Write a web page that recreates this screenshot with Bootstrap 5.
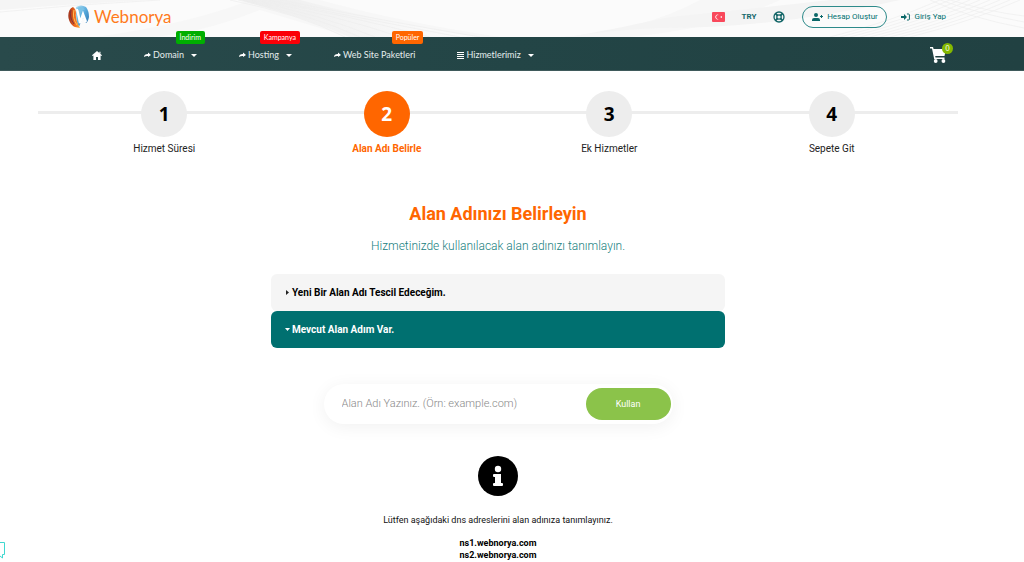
<!DOCTYPE html>
<html lang="tr">
<head>
<meta charset="utf-8">
<meta name="viewport" content="width=device-width, initial-scale=1">
<title>Webnorya - Alan Adı Belirle</title>
<link href="https://cdn.jsdelivr.net/npm/bootstrap@5.3.0/dist/css/bootstrap.min.css" rel="stylesheet">
<style>
  :root { --teal: #007070; --orange: #ff6600; --green: #8bc34a; }
  body { font-family: "Roboto", "Liberation Sans", sans-serif; font-size: 10px; line-height: 12px; color: #222; background: #fff; }
  a { text-decoration: none; }
  svg { display: block; flex: none; }
  .page-inner { padding-left: 68px; padding-right: 78px; }
  .topbar { height: 37px; padding-bottom: 4px; background: #fbfbfb; }
  .topbar-art { position: absolute; inset: 0; width: 100%; height: 100%; }
  .brand-name { font: 17px/24px "Lato", sans-serif; color: #ff7a1c; }
  .icon-gap { gap: 2px; }
  .tools { gap: 17px; }
  .tools .account { gap: 14px; }
  .tools a { color: var(--teal); font-size: 8px; line-height: 12px; }
  .tools .currency { font-weight: 700; color: #17696b; }
  .tools .signup { border: 1px solid #2d8a8a; border-radius: 12px; height: 22px; width: 85px; }
  .mainnav { min-height: 34px; padding-top: 3px; background: linear-gradient(90deg, #294a4b, #234546 50%, #214142); border-bottom: 1px solid #3f5a5b; padding-left: 92px; }
  .mainnav a { color: #e4eded; font: 9px/12px "Lato", sans-serif; }
  .menu { gap: 42px; }
  .caret { border: 3px solid transparent; border-top-color: #fff; border-bottom: 0; margin-left: 5px; }
  .tag { position: absolute; top: -18px; right: -8px; height: 13px; padding: 0 4px; border-radius: 2px; font: 7px/13px "Lato", sans-serif; color: #fff; white-space: nowrap; }
  .tag-green { background: #00ae00; }
  .tag-red { background: #fb0007; }
  .tag-orange { background: var(--orange); }
  .cart-count { position: absolute; left: 12px; top: -4px; width: 11px; height: 11px; border-radius: 50%; background: #84b800; color: #fff; font: 7px/11px "Lato", sans-serif; text-align: center; }
  main { padding: 20px 66px 0 38px; }
  .steps { padding: 0 15px; margin: 0 0 47px; background: linear-gradient(#ededed, #ededed) 0 20px / 100% 3px no-repeat; }
  .steps li { width: 25%; }
  .step-num { width: 46px; height: 46px; border-radius: 50%; background: #ededed; color: #000; font: bold 19px/47px "Open Sans", sans-serif; }
  .step-text { font-size: 10px; line-height: 12px; margin-top: 6px; }
  .active .step-num { background: var(--orange); color: #fff; }
  .active .step-text { color: var(--orange); font-weight: 700; }
  h1 { font-size: 18px; line-height: 24px; font-weight: 700; color: var(--orange); margin: 0 0 12px; }
  .intro { font-size: 12px; line-height: 16px; font-weight: 300; color: #17807e; margin: 0 0 20px; }
  .choices { width: 50%; min-width: 300px; max-width: 454px; }
  .choice { width: 100%; min-height: 37px; padding: 0 14px; gap: 2px; border: 0; border-radius: 6px; background: #f5f5f5; color: #000; font-size: 10px; font-weight: 700; }
  .choice.open { background: var(--teal); color: #fff; }
  .domain-form { width: 38%; min-width: 280px; max-width: 349px; height: 40px; margin-top: 36px; padding: 4px 2px 4px 18px; border-radius: 20px; background: #fff; box-shadow: 0 3px 18px rgba(0,0,0,.06); }
  .domain-form input { font-size: 11px; font-weight: 300; border: 0; outline: 0; min-width: 0; background: none; padding: 0; }
  .domain-form input::placeholder { color: #888; }
  .use-btn { width: 85px; border: 0; border-radius: 16px; background: var(--green); color: #fff; font-size: 9px; }
  .info-icon { margin-top: 32px; }
  .notice { font-size: 9px; line-height: 12px; margin: 18px 0 11px; color: #111; }
  .servers { font-size: 9px; line-height: 12px; }
  .chat { position: fixed; left: 0; bottom: 3px; }
</style>
</head>
<body>
<header>
  <div class="topbar page-inner position-relative d-flex align-items-center justify-content-between">
    <svg class="topbar-art" viewBox="0 0 1024 37" preserveAspectRatio="none" aria-hidden="true">
      <defs>
        <linearGradient id="fade" x1="0" x2="1"><stop offset="0" stop-color="#ededed"/><stop offset="1" stop-color="#fcfcfc"/></linearGradient>
      </defs>
      <path d="M0 10Q70 4 150 0H0Z" fill="#f5f5f5"/>
      <path d="M95 37Q190 24 250 0H320Q400 22 500 37H350L260 10Q200 34 150 37Z" fill="#f7f7f7"/>
      <path d="M300 0Q400 26 480 37H350Q310 20 240 0Z" fill="url(#fade)"/>
      <path d="M560 37Q640 32 700 0H780Q720 28 630 37Z" fill="#f7f7f7"/>
      <path d="M570 37Q620 28 670 17Q760 8 830 0H900Q780 28 660 28Q610 30 570 37Z" fill="#f4f4f4"/>
      <g fill="none" stroke="#eeeeee" stroke-width=".7">
        <path d="M0 12Q80 4 160 0M230 0Q300 14 345 37M238 0Q310 14 360 37M246 0Q320 14 375 37M254 0Q340 16 400 37M262 0Q350 16 430 37M270 0Q370 20 460 37M280 0Q390 22 480 37"/>
        <path d="M830 37Q890 22 940 0M840 37Q900 22 950 0M850 37Q910 22 960 0M860 37Q920 22 970 0M870 37Q930 22 980 0M880 37Q940 22 990 0M890 37Q950 22 1000 0M900 37Q960 22 1010 0M910 37Q970 22 1020 0M930 0Q970 18 1024 28M940 0Q980 14 1024 22M950 0Q990 12 1024 16"/>
      </g>
    </svg>
    <a href="#" class="position-relative d-flex align-items-center gap-1">
      <svg width="22" height="24" viewBox="0 0 22 24" aria-hidden="true">
        <defs><linearGradient id="flame" x1="0" x2="1"><stop offset="0" stop-color="#9d2f1a"/><stop offset=".55" stop-color="#f06a1d"/><stop offset="1" stop-color="#ffb03a"/></linearGradient>
        <linearGradient id="sky" x1="0" x2="1" y2="1"><stop offset="0" stop-color="#b8e3f6"/><stop offset=".5" stop-color="#56a9db"/><stop offset="1" stop-color="#2a6da9"/></linearGradient></defs>
        <path d="M8 2Q13-1 18 2Q21 6 21 12Q20 17 18 18L15 12L11 22Q8 17 8 9Z" fill="url(#sky)"/>
        <path d="M9 4Q11 12 12 18L15 9L18 17" stroke="#fff" stroke-width="2.4" fill="none"/>
        <path d="M9 3Q14 0 17 5Q14 4 13 8Z" fill="#7cc3e6"/>
        <path d="M5 2C-2 5-1 18 7 22L12 23Q7 15 8 8Q8 4 5 2Z" fill="url(#flame)"/>
        <path d="M3 5Q1 12 6 19" stroke="#7e3340" fill="none"/>
        <path d="M6 5Q4 13 9 20" stroke="#ffc15a" fill="none"/>
      </svg>
      <span class="brand-name">Webnorya</span>
    </a>
    <div class="tools position-relative d-flex align-items-center">
      <a href="#" aria-label="Türkçe">
        <svg width="13" height="10" viewBox="0 0 13 10"><rect width="13" height="10" rx="1" fill="#f9485b"/><path d="M7 3.2A2.3 2.3 0 1 0 7 6.8A2 2 0 1 1 7 3.2Z" fill="#fff"/><path d="M8 5l2-.9-.1 1.8Z" fill="#fff"/></svg>
      </a>
      <a href="#" class="currency">TRY</a>
      <a href="#" aria-label="Destek">
        <svg width="12" height="12" viewBox="0 0 12 12" fill="none" stroke="#126567"><circle cx="6" cy="6" r="5" stroke-width="1.3"/><circle cx="6" cy="6" r="2.2" stroke-width="1.2"/><path d="M2.3 2.3l2.2 2.2M9.7 2.3L7.5 4.5M2.3 9.7l2.2-2.2M9.7 9.7L7.5 7.5" stroke-width="1.8"/></svg>
      </a>
      <div class="account d-flex align-items-center">
      <a href="#" class="signup d-flex align-items-center justify-content-center gap-1 text-nowrap">
        <svg width="11" height="8" viewBox="0 0 11 8" fill="#0b6768"><circle cx="4" cy="2" r="2"/><path d="M0 8V7Q0 5 2 5H6Q8 5 8 7V8ZM8 3H9V2H10V3H11V4H10V5H9V4H8Z"/></svg>
        <span>Hesap Oluştur</span>
      </a>
      <a href="#" class="d-flex align-items-center gap-1 text-nowrap">
        <svg width="9" height="8" viewBox="0 0 9 8"><path d="M0 3H3V1L6 4L3 7V5H0Z" fill="#0b6768"/><path d="M6 1H7.5Q8.4 1 8.4 2V6Q8.4 7 7.5 7H6" stroke="#0b6768" fill="none"/></svg>
        <span>Giriş Yap</span>
      </a>
      </div>
    </div>
  </div>
  <nav class="mainnav page-inner d-flex align-items-center justify-content-between" aria-label="Ana menü">
    <ul class="menu list-unstyled d-flex align-items-center m-0">
      <li><a href="#" aria-label="Ana sayfa"><svg width="10" height="9" viewBox="0 0 10 9" fill="#fff"><path d="M5 0L10 4.3 9.4 5 8.6 4.4V9H6V6H4V9H1.4V4.4L.6 5 0 4.3ZM7.4.7H8.5V2.8L7.4 1.9Z"/></svg></a></li>
      <li class="position-relative"><a href="#" class="icon-gap d-flex align-items-center text-nowrap"><svg width="7" height="6" viewBox="0 0 7 6" fill="#fff"><path d="M0 5Q0 2 4 2V.5L7 3L4 5V4Q2 3.7 0 5Z"/></svg>Domain<span class="caret"></span></a><span class="tag tag-green">İndirim</span></li>
      <li class="position-relative"><a href="#" class="icon-gap d-flex align-items-center text-nowrap"><svg width="7" height="6" viewBox="0 0 7 6" fill="#fff"><path d="M0 5Q0 2 4 2V.5L7 3L4 5V4Q2 3.7 0 5Z"/></svg>Hosting<span class="caret"></span></a><span class="tag tag-red">Kampanya</span></li>
      <li class="position-relative"><a href="#" class="icon-gap d-flex align-items-center text-nowrap"><svg width="7" height="6" viewBox="0 0 7 6" fill="#fff"><path d="M0 5Q0 2 4 2V.5L7 3L4 5V4Q2 3.7 0 5Z"/></svg>Web Site Paketleri</a><span class="tag tag-orange">Popüler</span></li>
      <li><a href="#" class="icon-gap d-flex align-items-center text-nowrap"><svg width="7" height="7" viewBox="0 0 7 7" fill="#fff"><path d="M0 0H7V1H0ZM0 2H7V3H0ZM0 4H7V5H0ZM0 6H7V7H0Z"/></svg>Hizmetlerimiz<span class="caret"></span></a></li>
    </ul>
    <a href="#" class="position-relative" aria-label="Sepet">
      <svg width="16" height="16" viewBox="0 0 16 16" fill="#fff"><path d="M0 0H3L3.6 2H16L14.5 9H5.2L5.5 10.4H14.5V12H4.2L2 1.5H0Z"/><circle cx="5.7" cy="14" r="1.9"/><circle cx="13.4" cy="14" r="1.9"/></svg>
      <span class="cart-count">0</span>
    </a>
  </nav>
</header>

<main>
  <ol class="steps list-unstyled d-flex text-center">
    <li><div class="step-num mx-auto">1</div><div class="step-text">Hizmet Süresi</div></li>
    <li class="active" aria-current="step"><div class="step-num mx-auto">2</div><div class="step-text">Alan Adı Belirle</div></li>
    <li><div class="step-num mx-auto">3</div><div class="step-text">Ek Hizmetler</div></li>
    <li><div class="step-num mx-auto">4</div><div class="step-text">Sepete Git</div></li>
  </ol>
  <section class="text-center">
    <h1>Alan Adınızı Belirleyin</h1>
    <p class="intro">Hizmetinizde kullanılacak alan adınızı tanımlayın.</p>
    <div class="choices mx-auto">
      <button type="button" class="choice d-flex align-items-center" aria-expanded="false"><svg width="5" height="5" viewBox="0 0 5 5"><path d="M1 0L4 2.5L1 5Z" fill="#222"/></svg>Yeni Bir Alan Adı Tescil Edeceğim.</button>
      <button type="button" class="choice open d-flex align-items-center" aria-expanded="true"><svg width="5" height="5" viewBox="0 0 5 5"><path d="M0 1H5L2.5 4Z" fill="#fff"/></svg>Mevcut Alan Adım Var.</button>
    </div>
    <form class="domain-form mx-auto d-flex">
      <input type="text" class="flex-grow-1" aria-label="Alan adı" placeholder="Alan Adı Yazınız. (Örn: example.com)">
      <button type="button" class="use-btn">Kullan</button>
    </form>
    <svg class="info-icon mx-auto" width="40" height="40" viewBox="0 0 40 40" aria-hidden="true"><circle cx="20" cy="20" r="20"/><circle cx="20" cy="13" r="3.2" fill="#fff"/><path d="M16 18H23V27H24Q25 27 25 28V29Q25 30 24 30H16Q15 30 15 29V28Q15 27 16 27H17V21H16Q15 21 15 20V19Q15 18 16 18Z" fill="#fff"/></svg>
    <p class="notice">Lütfen aşağıdaki dns adreslerini alan adınıza tanımlayınız.</p>
    <p class="servers m-0 fw-bold text-black">ns1.webnorya.com<br>ns2.webnorya.com</p>
  </section>
</main>
<a href="#" class="chat" aria-label="Canlı destek"><svg width="5" height="18" viewBox="0 0 5 18" fill="none" stroke="#40d8d0"><path d="M0 1.5H4.5V13.5H2.5V17L0 15"/></svg></a>
<script src="https://cdn.jsdelivr.net/npm/bootstrap@5.3.0/dist/js/bootstrap.bundle.min.js"></script>
</body>
</html>
